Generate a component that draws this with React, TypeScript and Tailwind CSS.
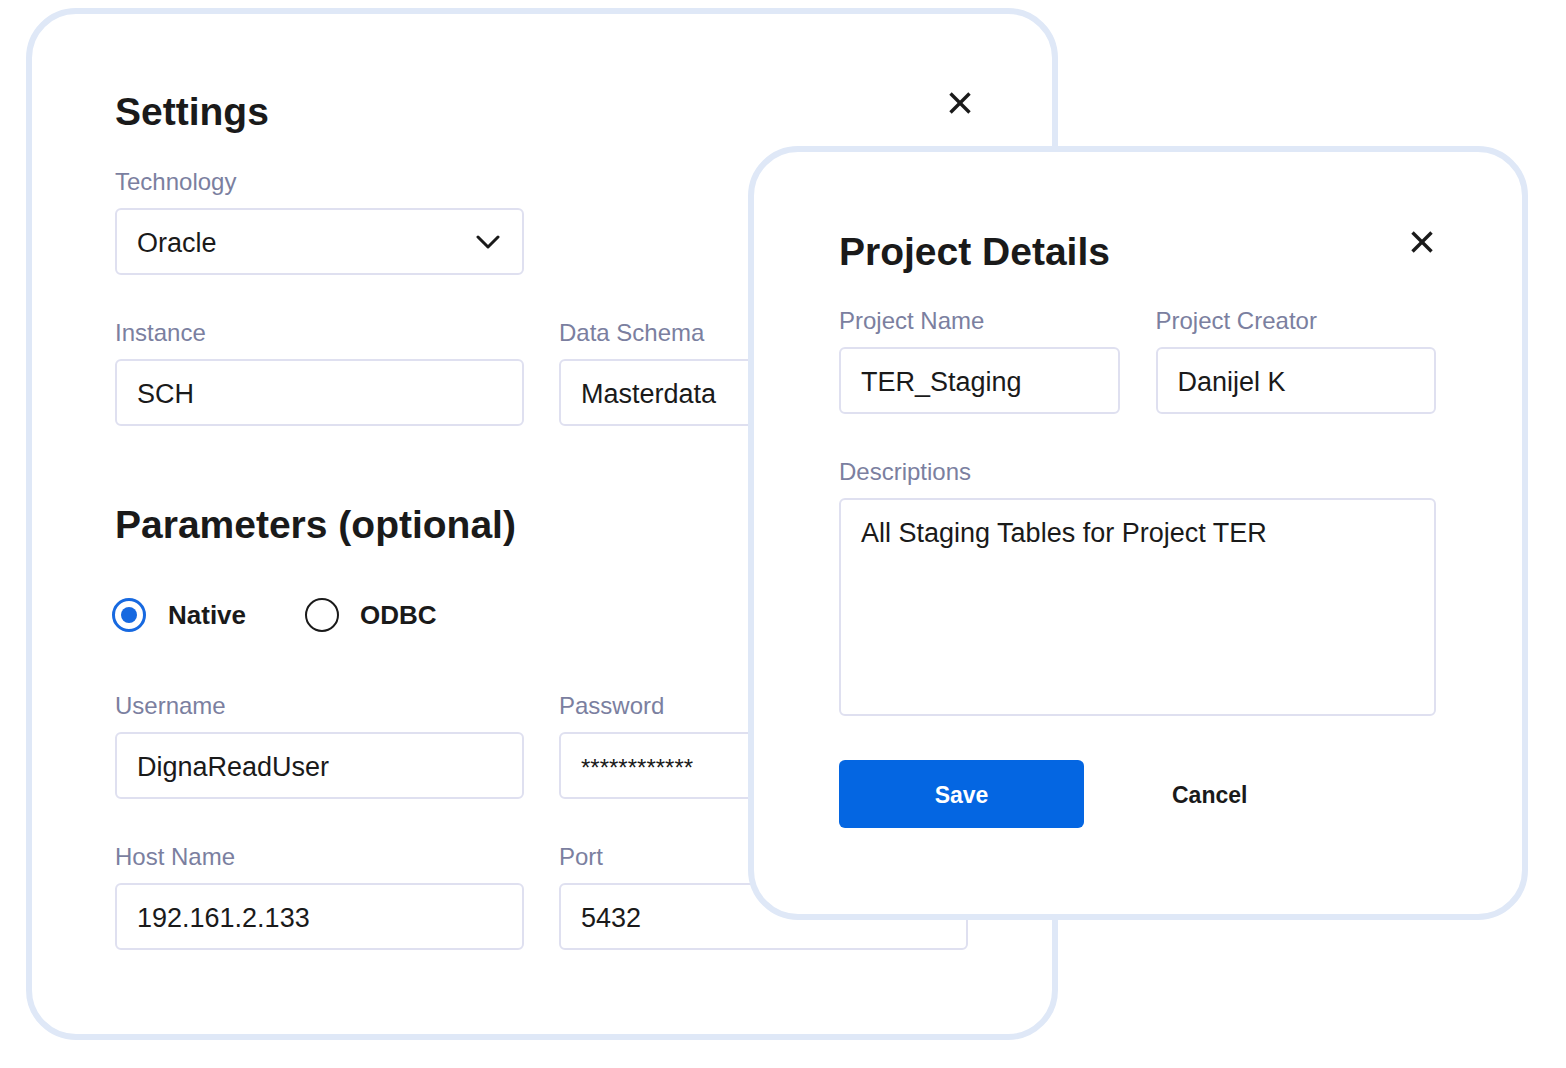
import React from "react";

const font = { fontFamily: '"Liberation Sans", Arial, sans-serif' };

function CloseIcon() {
  return (
    <svg width="24" height="24" viewBox="0 0 24 24" fill="none" stroke="#1a1a1a" strokeWidth="3.4" strokeLinecap="butt">
      <line x1="2.5" y1="2.5" x2="21.5" y2="21.5" />
      <line x1="21.5" y1="2.5" x2="2.5" y2="21.5" />
    </svg>
  );
}

function Label({ children }: { children: React.ReactNode }) {
  return <div className="text-[24px] leading-[28px] text-[#7b7fa0]">{children}</div>;
}

function Field({ value, small }: { value: string; small?: boolean }) {
  return (
    <div className="h-[67px] rounded-[6px] border-2 border-[#dfe0f0] bg-white flex items-center px-[20px] pt-[4px]">
      <span className={small ? "text-[24px] text-[#1a1a1a]" : "text-[27px] text-[#1a1a1a]"}>{value}</span>
    </div>
  );
}

function LabeledField({ label, value, small }: { label: string; value: string; small?: boolean }) {
  return (
    <div className="flex flex-col gap-[12px]">
      <Label>{label}</Label>
      <Field value={value} small={small} />
    </div>
  );
}

function SettingsCard() {
  return (
    <div className="w-[1032px] h-[1032px] rounded-[50px] border-[6px] border-[#dfe8f7] bg-white pl-[83px] pt-[74px]">
      <div className="w-[857px] flex items-start">
        <h1 className="text-[39px] leading-[48px] font-bold text-[#1a1a1a]">Settings</h1>
        <div className="ml-auto mt-[3px]">
          <CloseIcon />
        </div>
      </div>

      <div className="mt-[32px] w-[409px]">
        <div className="flex flex-col gap-[12px]">
          <Label>Technology</Label>
          <div className="h-[67px] rounded-[6px] border-2 border-[#dfe0f0] bg-white flex items-center pl-[20px] pr-[22px] pt-[4px]">
            <span className="text-[27px] text-[#1a1a1a]">Oracle</span>
            <svg className="ml-auto -mt-[4px]" width="24" height="14" viewBox="0 0 24 14" fill="none" stroke="#1a1a1a" strokeWidth="3" strokeLinecap="round" strokeLinejoin="round">
              <polyline points="2,2 12,12 22,2" />
            </svg>
          </div>
        </div>
      </div>

      <div className="mt-[44px] grid grid-cols-[409px_409px] gap-x-[35px]">
        <LabeledField label="Instance" value="SCH" />
        <LabeledField label="Data Schema" value="Masterdata" />
      </div>

      <h2 className="mt-[75px] text-[39px] leading-[48px] font-bold text-[#1a1a1a]">Parameters (optional)</h2>

      <div className="mt-[49px] flex items-center h-[34px] -ml-[3px]">
        <div className="w-[34px] h-[34px] rounded-full border-[3px] border-[#1769e0] flex items-center justify-center">
          <div className="w-[16px] h-[16px] rounded-full bg-[#1769e0]" />
        </div>
        <span className="ml-[22px] text-[26px] font-bold text-[#1a1a1a]">Native</span>
        <div className="ml-[59px] w-[34px] h-[34px] rounded-full border-[2.5px] border-[#1a1a1a]" />
        <span className="ml-[21px] text-[26px] font-bold text-[#1a1a1a]">ODBC</span>
      </div>

      <div className="mt-[60px] grid grid-cols-[409px_409px] gap-x-[35px] gap-y-[44px]">
        <LabeledField label="Username" value="DignaReadUser" />
        <LabeledField label="Password" value="************" small />
        <LabeledField label="Host Name" value="192.161.2.133" />
        <LabeledField label="Port" value="5432" />
      </div>
    </div>
  );
}

function ProjectCard() {
  return (
    <div className="absolute left-[748px] top-[146px] w-[780px] h-[774px] rounded-[50px] border-[6px] border-[#dfe8f7] bg-white pl-[85px] pr-[86px] pt-[76px]">
      <div className="flex items-start">
        <h1 className="text-[39px] leading-[48px] font-bold text-[#1a1a1a]">Project Details</h1>
        <div className="ml-auto mt-[2px] mr-[2px]">
          <CloseIcon />
        </div>
      </div>

      <div className="mt-[31px] grid grid-cols-2 gap-x-[36px]">
        <LabeledField label="Project Name" value="TER_Staging" />
        <LabeledField label="Project Creator" value="Danijel K" />
      </div>

      <div className="mt-[44px] flex flex-col gap-[12px]">
        <Label>Descriptions</Label>
        <div className="h-[218px] rounded-[6px] border-2 border-[#dfe0f0] bg-white px-[20px] pt-[13px]">
          <span className="text-[27px] text-[#1a1a1a]">All Staging Tables for Project TER</span>
        </div>
      </div>

      <div className="mt-[44px] flex items-center">
        <button className="w-[245px] h-[68px] rounded-[6px] bg-[#0466e2] text-white text-[23px] font-bold pt-[2px]">
          Save
        </button>
        <button className="ml-[88px] text-[23px] font-bold text-[#1a1a1a] pt-[2px]">Cancel</button>
      </div>
    </div>
  );
}

export default function App() {
  return (
    <div className="relative w-[1566px] h-[1068px] bg-white overflow-hidden" style={font}>
      <div className="pl-[26px] pt-[8px]">
        <SettingsCard />
      </div>
      <ProjectCard />
    </div>
  );
}
